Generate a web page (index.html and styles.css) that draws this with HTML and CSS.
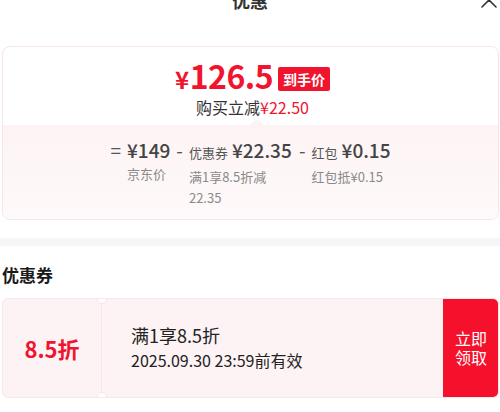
FILE: index.html
```html
<!DOCTYPE html>
<html lang="zh-CN">
<head>
<meta charset="utf-8">
<link rel="stylesheet" href="styles.css">
</head>
<body>
<div class="page">
  <header class="hd">
    <span class="title">优惠</span>
    <button class="close" aria-label="关闭">
      <svg width="18" height="18" viewBox="0 0 18 18"><path d="M2 2 L16 16 M16 2 L2 16" stroke="#333" stroke-width="1.6" fill="none" stroke-linecap="round"/></svg>
    </button>
  </header>

  <section class="summary">
    <div class="final">
      <div class="price-line">
        <span class="price"><span class="yen">¥</span>126.5</span>
        <span class="tag">到手价</span>
      </div>
      <div class="save">购买立减<span class="red">¥22.50</span></div>
    </div>
    <div class="calc">
      <div class="item">
        <span class="op">=</span>
        <div class="blk">
          <div class="main"><span class="amt">¥149</span></div>
          <div class="sub">京东价</div>
        </div>
      </div>
      <div class="item">
        <span class="op">-</span>
        <div class="blk wide">
          <div class="main"><span class="lbl">优惠券</span><span class="amt">¥22.35</span></div>
          <div class="sub">满1享8.5折减22.35</div>
        </div>
      </div>
      <div class="item">
        <span class="op">-</span>
        <div class="blk">
          <div class="main"><span class="lbl">红包</span><span class="amt">¥0.15</span></div>
          <div class="sub">红包抵¥0.15</div>
        </div>
      </div>
    </div>
  </section>

  <div class="band"></div>

  <h3 class="sec-title">优惠券</h3>

  <div class="coupon">
    <div class="c-left">8.5折</div>
    <div class="c-perf"></div>
    <div class="c-mid">
      <div class="c-name">满1享8.5折</div>
      <div class="c-date">2025.09.30 23:59前有效</div>
    </div>
    <button class="c-btn"><span>立即</span><span>领取</span></button>
  </div>
</div>
</body>
</html>
```

FILE: styles.css
```css
* { box-sizing: border-box; }
html, body { margin: 0; padding: 0; background: #fff; }
body {
  font-family: "Noto Sans CJK SC", "Noto Sans", sans-serif;
  color: #333;
  overflow: hidden;
}
.page { width: 500px; }

.hd {
  position: relative;
  height: 56px;
  margin-top: -10px;
  display: flex;
  justify-content: center;
  align-items: flex-start;
}
.title {
  font-size: 18px;
  line-height: 20px;
  font-weight: 700;
  color: #333;
}
.close {
  position: absolute;
  right: 2px;
  top: 1px;
  padding: 0;
  border: 0;
  background: none;
  width: 18px;
  height: 18px;
}
.close svg { display: block; }

.summary {
  margin: 0 1px 0 2px;
  border: 1px solid #f6e6e8;
  border-radius: 8px;
  overflow: hidden;
  background: #fff;
}
.final {
  padding: 12px 0 7px;
  display: flex;
  flex-direction: column;
  align-items: center;
}
.price-line {
  display: flex;
  align-items: flex-end;
  gap: 5px;
  margin-left: 4px;
  height: 32px;
}
.price {
  font-size: 32px;
  line-height: 32px;
  height: 32px;
  font-weight: 700;
  color: #f0142e;
  letter-spacing: -0.5px;
}
.yen { font-size: 24px; line-height: 1; margin-right: 1px; }
.tag {
  background: #f0142e;
  color: #fff;
  font-size: 14px;
  font-weight: 700;
  line-height: 24px;
  height: 24px;
  padding: 0 5px;
  border-radius: 2px;
}
.save {
  margin-top: 5px;
  font-size: 16px;
  line-height: 22px;
  color: #333;
  margin-left: 4px;
}
.red { color: #f0142e; }

.calc {
  position: relative;
  background: linear-gradient(#fdf3f4, #fef9fa);
  padding: 12px 0 11px;
  display: flex;
  justify-content: center;
  gap: 6px;
}
.calc::before {
  content: "";
  position: absolute;
  top: -6px;
  left: 50%;
  margin-left: -1px;
  border-left: 7px solid transparent;
  border-right: 7px solid transparent;
  border-bottom: 6px solid #fdf3f4;
}
.item { display: flex; align-items: flex-start; }
.op {
  font-size: 19px;
  line-height: 26px;
  color: #555;
  margin-right: 6px;
}
.blk.wide { width: 104px; }
.main {
  font-size: 19px;
  line-height: 26px;
  font-weight: 500;
  color: #444;
  white-space: nowrap;
}
.lbl { font-size: 13px; font-weight: 400; color: #555; margin-right: 4px; }
.sub {
  font-size: 13px;
  line-height: 21px;
  color: #8a8a8a;
}

.band {
  margin-top: 18px;
  height: 8px;
  background: #f6f6f9;
}

.sec-title {
  margin: 17px 0 0 2px;
  font-size: 17px;
  line-height: 24px;
  font-weight: 700;
  color: #1a1a1a;
}

.coupon {
  margin: 11px 1px 0 2px;
  height: 100px;
  display: flex;
  border: 1px solid #f8e8ea;
  border-radius: 6px;
  background: #fdf3f4;
  overflow: hidden;
}
.c-left {
  width: 98px;
  display: flex;
  align-items: center;
  justify-content: center;
  font-size: 22px;
  font-weight: 700;
  color: #f0142e;
}
.c-perf {
  position: relative;
  width: 5px;
  border-left: 1px solid #f7e6e8;
}
.c-perf::before, .c-perf::after {
  content: "";
  position: absolute;
  left: -5px;
  width: 8px;
  height: 8px;
  border-radius: 50%;
  background: #fff;
  border: 1px solid #f6e4e6;
}
.c-perf::before { top: -5px; }
.c-perf::after { bottom: -5px; }
.c-mid {
  flex: 1;
  display: flex;
  flex-direction: column;
  justify-content: center;
  padding-left: 25px;
}
.c-name { font-size: 18px; line-height: 25px; color: #222; }
.c-date { font-size: 16px; line-height: 25px; color: #222; }
.c-btn {
  width: 56px;
  border: 0;
  padding: 0;
  margin: -1px -1px -1px 0;
  background: #f5102b;
  color: #fff;
  font-family: inherit;
  font-size: 16px;
  line-height: 19px;
  border-radius: 0 6px 6px 0;
  display: flex;
  flex-direction: column;
  align-items: center;
  justify-content: center;
}
.c-btn span { display: block; }
```
